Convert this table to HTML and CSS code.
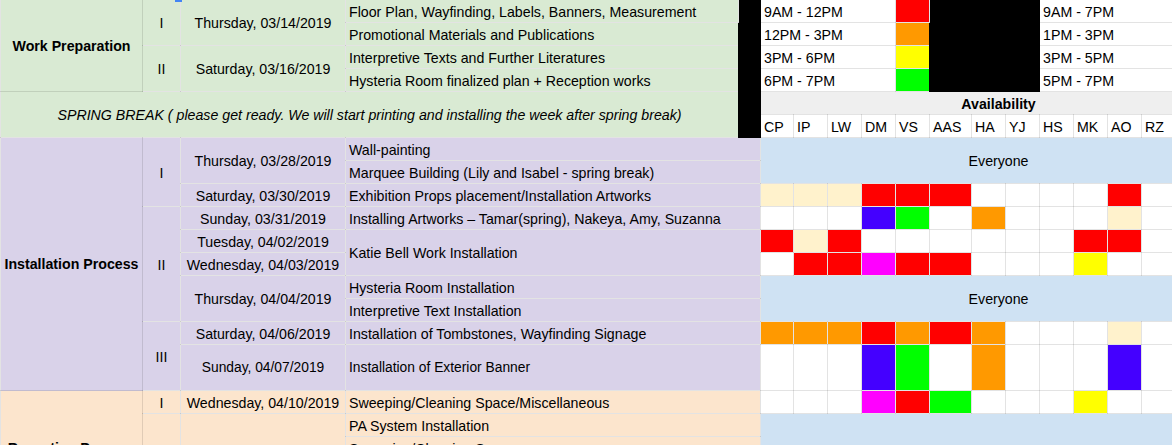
FILE: index.html
```html
<!DOCTYPE html>
<html>
<head>
<meta charset="utf-8">
<link rel="stylesheet" href="styles.css">
</head>
<body>
<div class="sheet">
<span class="handle"></span>
<table class="grid">
<colgroup>
<col class="w-a"><col class="w-b"><col class="w-c"><col class="w-d"><col class="w-e">
<col class="w-33"><col class="w-34"><col class="w-34"><col class="w-34"><col class="w-34">
<col class="w-42"><col class="w-34"><col class="w-34"><col class="w-34"><col class="w-34">
<col class="w-34"><col class="w-34"><col class="w-34"><col class="w-27">
</colgroup>
<tbody>
<tr>
<td class="green sect" rowspan="4">Work Preparation</td>
<td class="green ctr" rowspan="2">I</td>
<td class="green ctr" rowspan="2">Thursday, 03/14/2019</td>
<td class="green">Floor Plan, Wayfinding, Labels, Banners, Measurement</td>
<td class="black" rowspan="6"></td>
<td class="white" colspan="4">9AM - 12PM</td>
<td class="red"></td>
<td class="black" colspan="3" rowspan="4"></td>
<td class="white" colspan="6">9AM - 7PM</td>
</tr>
<tr>
<td class="green">Promotional Materials and Publications</td>
<td class="white" colspan="4">12PM - 3PM</td>
<td class="orange"></td>
<td class="white" colspan="6">1PM - 3PM</td>
</tr>
<tr>
<td class="green ctr" rowspan="2">II</td>
<td class="green ctr" rowspan="2">Saturday, 03/16/2019</td>
<td class="green">Interpretive Texts and Further Literatures</td>
<td class="white" colspan="4">3PM - 6PM</td>
<td class="yellow"></td>
<td class="white" colspan="6">3PM - 5PM</td>
</tr>
<tr>
<td class="green">Hysteria Room finalized plan + Reception works</td>
<td class="white" colspan="4">6PM - 7PM</td>
<td class="lime"></td>
<td class="white" colspan="6">5PM - 7PM</td>
</tr>
<tr>
<td class="green ctr note" colspan="4" rowspan="2">SPRING BREAK ( please get ready. We will start printing and installing the week after spring break)</td>
<td class="gray ctr bold" colspan="14">Availability</td>
</tr>
<tr class="names">
<td>CP</td><td>IP</td><td>LW</td><td>DM</td><td>VS</td><td>AAS</td><td>HA</td><td>YJ</td><td>HS</td><td>MK</td><td>AO</td><td>RZ</td><td></td><td></td>
</tr>
<tr>
<td class="purple sect" rowspan="10">Installation Process</td>
<td class="purple ctr" rowspan="3">I</td>
<td class="purple ctr" rowspan="2">Thursday, 03/28/2019</td>
<td class="purple" colspan="2">Wall-painting</td>
<td class="blue ctr" colspan="14" rowspan="2">Everyone</td>
</tr>
<tr>
<td class="purple" colspan="2">Marquee Building (Lily and Isabel - spring break)</td>
</tr>
<tr>
<td class="purple ctr">Saturday, 03/30/2019</td>
<td class="purple" colspan="2">Exhibition Props placement/Installation Artworks</td>
<td class="cream"></td><td class="cream"></td><td class="cream"></td><td class="red"></td><td class="red"></td><td class="red"></td><td class="white"></td><td class="white"></td><td class="white"></td><td class="white"></td><td class="red"></td><td class="white"></td><td class="white"></td><td class="white"></td>
</tr>
<tr>
<td class="purple ctr" rowspan="5">II</td>
<td class="purple ctr">Sunday, 03/31/2019</td>
<td class="purple" colspan="2">Installing Artworks – Tamar(spring), Nakeya, Amy, Suzanna</td>
<td class="white"></td><td class="white"></td><td class="white"></td><td class="violet"></td><td class="lime"></td><td class="white"></td><td class="orange"></td><td class="white"></td><td class="white"></td><td class="white"></td><td class="cream"></td><td class="white"></td><td class="white"></td><td class="white"></td>
</tr>
<tr>
<td class="purple ctr">Tuesday, 04/02/2019</td>
<td class="purple" colspan="2" rowspan="2">Katie Bell Work Installation</td>
<td class="red"></td><td class="cream"></td><td class="red"></td><td class="white"></td><td class="white"></td><td class="white"></td><td class="white"></td><td class="white"></td><td class="white"></td><td class="red"></td><td class="red"></td><td class="white"></td><td class="white"></td><td class="white"></td>
</tr>
<tr>
<td class="purple ctr">Wednesday, 04/03/2019</td>
<td class="white"></td><td class="red"></td><td class="red"></td><td class="magenta"></td><td class="red"></td><td class="red"></td><td class="white"></td><td class="white"></td><td class="white"></td><td class="yellow"></td><td class="white"></td><td class="white"></td><td class="white"></td><td class="white"></td>
</tr>
<tr>
<td class="purple ctr" rowspan="2">Thursday, 04/04/2019</td>
<td class="purple" colspan="2">Hysteria Room Installation</td>
<td class="blue ctr" colspan="14" rowspan="2">Everyone</td>
</tr>
<tr>
<td class="purple" colspan="2">Interpretive Text Installation</td>
</tr>
<tr>
<td class="purple ctr" rowspan="2">III</td>
<td class="purple ctr">Saturday, 04/06/2019</td>
<td class="purple" colspan="2">Installation of Tombstones, Wayfinding Signage</td>
<td class="orange"></td><td class="orange"></td><td class="orange"></td><td class="red"></td><td class="orange"></td><td class="red"></td><td class="orange"></td><td class="white"></td><td class="white"></td><td class="white"></td><td class="cream"></td><td class="white"></td><td class="white"></td><td class="white"></td>
</tr>
<tr class="tall">
<td class="purple ctr small">Sunday, 04/07/2019</td>
<td class="purple small" colspan="2">Installation of Exterior Banner</td>
<td class="white"></td><td class="white"></td><td class="white"></td><td class="violet"></td><td class="lime"></td><td class="white"></td><td class="orange"></td><td class="white"></td><td class="white"></td><td class="white"></td><td class="violet"></td><td class="white"></td><td class="white"></td><td class="white"></td>
</tr>
<tr>
<td class="peach sect" rowspan="5">Reception Process</td>
<td class="peach ctr">I</td>
<td class="peach ctr">Wednesday, 04/10/2019</td>
<td class="peach" colspan="2">Sweeping/Cleaning Space/Miscellaneous</td>
<td class="white"></td><td class="white"></td><td class="white"></td><td class="magenta"></td><td class="red"></td><td class="lime"></td><td class="white"></td><td class="white"></td><td class="white"></td><td class="yellow"></td><td class="white"></td><td class="white"></td><td class="white"></td><td class="white"></td>
</tr>
<tr>
<td class="peach ctr" rowspan="4"></td>
<td class="peach ctr" rowspan="4"></td>
<td class="peach" colspan="2">PA System Installation</td>
<td class="blue ctr" colspan="14" rowspan="4">Everyone</td>
</tr>
<tr>
<td class="peach" colspan="2">Sweeping/Cleaning Space</td>
</tr>
<tr>
<td class="peach" colspan="2"></td>
</tr>
<tr>
<td class="peach" colspan="2"></td>
</tr>
</tbody>
</table>
</div>
</body>
</html>
```
FILE: styles.css
```css
html, body {
  margin: 0;
  padding: 0;
  background: #ffffff;
}
body {
  overflow: hidden;
  font-family: "Liberation Sans", Arial, sans-serif;
  font-size: 14.2px;
  color: #000;
}
.sheet {
  position: relative;
  width: 1236px;
}
.handle {
  position: absolute;
  left: 175px;
  top: 0;
  width: 7px;
  height: 3px;
  background: #4285f4;
  z-index: 2;
}
.grid {
  border-collapse: collapse;
  table-layout: fixed;
  width: 1236px;
  margin-top: -1px;
}
.w-a { width: 142px; }
.w-b { width: 38px; }
.w-c { width: 165px; }
.w-d { width: 393px; }
.w-e { width: 22px; }
.w-33 { width: 33px; }
.w-34 { width: 34px; }
.w-42 { width: 42px; }
.w-27 { width: 27px; }
.grid tr { height: 23px; }
.grid tr.tall { height: 46px; }
.grid td {
  border: 1px solid rgba(0, 0, 0, 0.11);
  padding: 1px 3px 0;
  white-space: nowrap;
  overflow: hidden;
  vertical-align: middle;
  line-height: 16px;
  text-align: left;
}
.grid td.ctr { text-align: center; }
.grid td.sect {
  text-align: center;
  font-weight: bold;
  overflow: visible;
  padding: 0;
}
.bold { font-weight: bold; }
.note { font-style: italic; }
.small { font-size: 13.8px; }
.names td { background: #fff; }
.green { background: #d9ead3; }
.purple { background: #d9d2e9; }
.peach { background: #fce5cd; }
.blue { background: #cfe2f3; }
.cream { background: #fff2cc; }
.white { background: #ffffff; }
.gray { background: #efefef; }
.red { background: #ff0000; }
.orange { background: #ff9900; }
.yellow { background: #ffff00; }
.lime { background: #00ff00; }
.violet { background: #4400ff; }
.magenta { background: #ff00ff; }
.black { background: #000000; }
.grid td.black { border-color: #000; }
```
